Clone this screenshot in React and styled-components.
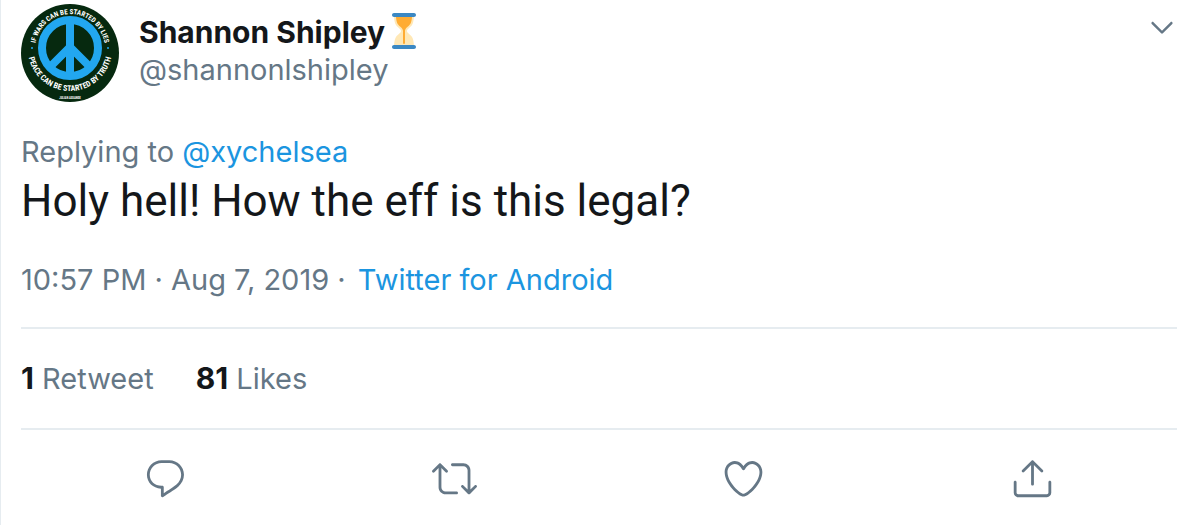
import styled, { createGlobalStyle } from "styled-components";

const GlobalStyle = createGlobalStyle`
    body {
        margin: 0;
        background: #ffffff;
        font-family: Inter, "Liberation Sans", sans-serif;
        font-size: 29px;
        line-height: 38px;
        color: #14171a;
    }
`;

const Tweet = styled.article`
    padding: 4px 19px 24px 20px;
    border-left: 1px solid #e6ecf0;
`;

const Header = styled.header`
    display: flex;
    align-items: flex-start;
`;

const Avatar = styled.svg`
    flex: none;
    width: 98px;
    height: 98px;
    margin-right: 20px;
`;

const Author = styled.div`
    flex: 1;
    min-width: 0;
    padding-top: 9px;
`;

const Name = styled.div`
    display: flex;
    align-items: flex-start;
    font-size: 30px;
    font-weight: 700;
`;

const Emoji = styled.svg`
    flex: none;
    width: 36px;
    height: 36px;
    margin-left: 1px;
`;

const Muted = styled.div`
    color: #657786;
`;

const IconButton = styled.button`
    display: flex;
    padding: 0;
    border: 0;
    background: none;
    color: #657786;
    cursor: pointer;

    svg {
        width: ${({ $size }) => $size}px;
        height: ${({ $size }) => $size}px;
        fill: currentColor;
    }
`;

const MenuButton = styled(IconButton)`
    margin-top: 8px;
`;

const Link = styled.a`
    color: #1b95e0;
    text-decoration: none;
`;

const Reply = styled(Muted)`
    margin-top: 31px;
`;

const Message = styled.p`
    margin: 0;
    font-family: Roboto, "Liberation Sans", sans-serif;
    font-size: 44px;
    line-height: 60px;
`;

const Meta = styled(Muted)`
    margin-top: 30px;
    padding-bottom: 28px;
`;

const Source = styled(Link)`
    margin-left: 4px;
`;

const Stats = styled.div`
    display: flex;
    gap: 42px;
    padding: 30px 0;
    border-top: 2px solid #e6ecf0;
    border-bottom: 2px solid #e6ecf0;
`;

const Stat = styled.a`
    color: #657786;
    text-decoration: none;

    strong {
        color: #14171a;
        font-size: 30px;
        font-weight: 700;
    }
`;

const Actions = styled.div`
    display: grid;
    grid-template-columns: repeat(4, 1fr);
    justify-items: center;
    padding-top: 26px;
`;

const AvatarText = styled.text`
    fill: #ffffff;
    font-family: "Roboto Condensed", Roboto, sans-serif;
    font-weight: 700;
    font-size: ${({ $size }) => $size}px;
    text-anchor: middle;
`;

const CHEVRON =
    "M20.207 8.147c-.39-.39-1.023-.39-1.414 0L12 14.94 5.207 8.147c-.39-.39-1.023-.39-1.414 0-.39.39-.39 1.023 0 1.414l7.5 7.5c.195.196.45.294.707.294s.512-.098.707-.293l7.5-7.5c.39-.39.39-1.022 0-1.413z";

const actions = [
    {
        label: "Reply",
        path: "M14.046 2.242l-4.148-.01h-.002c-4.374 0-7.8 3.427-7.8 7.802 0 4.098 3.186 7.206 7.465 7.37v3.828c0 .108.044.286.12.403.142.225.384.347.632.347.138 0 .277-.038.402-.118.264-.168 6.473-4.14 8.088-5.506 1.902-1.61 3.04-3.97 3.043-6.312v-.017c-.006-4.367-3.43-7.787-7.8-7.788zm3.787 12.972c-1.134.96-4.862 3.405-6.772 4.643V16.67c0-.414-.335-.75-.75-.75h-.396c-3.66 0-6.318-2.476-6.318-5.886 0-3.534 2.768-6.302 6.3-6.302l4.147.01h.002c3.532 0 6.3 2.766 6.302 6.296-.003 1.91-.942 3.844-2.514 5.176z",
    },
    {
        label: "Retweet",
        path: "M23.77 15.67c-.292-.293-.767-.293-1.06 0l-2.22 2.22V7.65c0-2.068-1.683-3.75-3.75-3.75h-5.85c-.414 0-.75.336-.75.75s.336.75.75.75h5.85c1.24 0 2.25 1.01 2.25 2.25v10.24l-2.22-2.22c-.293-.293-.768-.293-1.06 0s-.294.768 0 1.06l3.5 3.5c.145.147.337.22.53.22s.383-.072.53-.22l3.5-3.5c.294-.292.294-.767 0-1.06zm-10.66 3.28H7.26c-1.24 0-2.25-1.01-2.25-2.25V6.46l2.22 2.22c.148.147.34.22.532.22s.384-.073.53-.22c.293-.293.293-.768 0-1.06l-3.5-3.5c-.293-.294-.768-.294-1.06 0l-3.5 3.5c-.294.292-.294.767 0 1.06s.767.293 1.06 0l2.22-2.22V16.7c0 2.068 1.683 3.75 3.75 3.75h5.85c.414 0 .75-.336.75-.75s-.337-.75-.75-.75z",
    },
    {
        label: "Like",
        path: "M12 21.638h-.014C9.403 21.59 1.95 14.856 1.95 8.478c0-3.064 2.525-5.754 5.403-5.754 2.29 0 3.83 1.58 4.646 2.73.814-1.148 2.354-2.73 4.645-2.73 2.88 0 5.404 2.69 5.404 5.755 0 6.376-7.454 13.11-10.037 13.157H12zM7.354 4.225c-2.08 0-3.903 1.988-3.903 4.255 0 5.74 7.034 11.596 8.55 11.658 1.518-.062 8.55-5.917 8.55-11.658 0-2.267-1.823-4.255-3.903-4.255-2.528 0-3.94 2.936-3.952 2.965-.23.562-1.156.562-1.387 0-.014-.03-1.425-2.965-3.954-2.965z",
    },
    {
        label: "Share",
        path: "M17.53 7.47l-5-5c-.293-.293-.768-.293-1.06 0l-5 5c-.294.293-.294.768 0 1.06s.767.294 1.06 0l3.72-3.72V15c0 .414.336.75.75.75s.75-.336.75-.75V4.81l3.72 3.72c.146.147.338.22.53.22s.384-.072.53-.22c.293-.293.293-.767 0-1.06zM19.708 21.944H4.292C3.028 21.944 2 20.916 2 19.652V14c0-.414.336-.75.75-.75s.75.336.75.75v5.652c0 .437.355.792.792.792h15.416c.437 0 .792-.355.792-.792V14c0-.414.336-.75.75-.75s.75.336.75.75v5.652c0 1.264-1.028 2.292-2.292 2.292z",
    },
];

function Icon({ path }) {
    return (
        <svg viewBox="0 0 24 24" aria-hidden="true">
            <path d={path} />
        </svg>
    );
}

function PeaceAvatar() {
    return (
        <Avatar viewBox="0 0 98 98" role="img" aria-label="Shannon Shipley">
            <defs>
                {/* upper arc runs clockwise, lower arc counter-clockwise */}
                <path id="arc-top" d="M14 45a35 35 0 1 1 70 0" />
                <path id="arc-bottom" d="M7 45a42 42 0 0 0 84 0" />
            </defs>
            <circle cx="49" cy="49" r="49" fill="#06290f" />
            <g fill="none" stroke="#22a7f0" strokeWidth="8">
                <circle cx="49" cy="44" r="28" />
                <path d="M49 16v56M49 43L29 63M49 43l20 20" />
            </g>
            <circle cx="11" cy="44" r="1" fill="#22a7f0" />
            <circle cx="87" cy="44" r="1" fill="#22a7f0" />
            <AvatarText $size={7}>
                <textPath href="#arc-top" startOffset="50%">
                    IF WARS CAN BE STARTED BY LIES
                </textPath>
            </AvatarText>
            <AvatarText $size={8}>
                <textPath href="#arc-bottom" startOffset="50%">
                    PEACE CAN BE STARTED BY TRUTH
                </textPath>
            </AvatarText>
            <AvatarText $size={3} x="49" y="95">
                JULIAN ASSANGE
            </AvatarText>
        </Avatar>
    );
}

function Hourglass() {
    return (
        <Emoji viewBox="0 0 36 36" role="img" aria-label="Hourglass">
            <path
                fill="#ffe8b6"
                d="M21 18c0-2.001 3.246-3.369 5-6 2-3 2-10 2-10H8s0 7 2 10c1.754 2.631 5 3.999 5 6s-3.246 3.369-5 6c-2 3-2 10-2 10h20s0-7-2-10c-1.754-2.631-5-3.999-5-6z"
            />
            <path
                fill="#ffac33"
                d="M10 4h16c-.2 3-.8 5.500-1.700 7-1.500 2.400-5.300 4-5.300 7v12a1 1 0 0 1-2 0V18c0-3-3.800-4.600-5.300-7-.9-1.500-1.500-4-1.700-7z"
            />
            <path
                fill="#3b88c3"
                d="M30 34c0 1.104-.896 2-2 2H8c-1.104 0-2-.896-2-2s.896-2 2-2h20c1.104 0 2 .896 2 2zm0-32c0 1.104-.896 2-2 2H8c-1.104 0-2-.896-2-2s.896-2 2-2h20c1.104 0 2 .896 2 2z"
            />
        </Emoji>
    );
}

export default function App() {
    return (
        <>
            <GlobalStyle />
            <Tweet>
                <Header>
                    <PeaceAvatar />
                    <Author>
                        <Name>
                            Shannon Shipley
                            <Hourglass />
                        </Name>
                        <Muted>@shannonlshipley</Muted>
                    </Author>
                    <MenuButton type="button" aria-label="More" $size={30}>
                        <Icon path={CHEVRON} />
                    </MenuButton>
                </Header>
                <Reply>
                    Replying to <Link href="#xychelsea">@xychelsea</Link>
                </Reply>
                <Message>Holy hell! How the eff is this legal?</Message>
                <Meta>
                    10:57 PM · Aug 7, 2019 ·{" "}
                    <Source href="#source">Twitter for Android</Source>
                </Meta>
                <Stats>
                    <Stat href="#retweets">
                        <strong>1</strong> Retweet
                    </Stat>
                    <Stat href="#likes">
                        <strong>81</strong> Likes
                    </Stat>
                </Stats>
                <Actions>
                    {actions.map(({ label, path }) => (
                        <IconButton
                            key={label}
                            type="button"
                            aria-label={label}
                            $size={45}
                        >
                            <Icon path={path} />
                        </IconButton>
                    ))}
                </Actions>
            </Tweet>
        </>
    );
}
